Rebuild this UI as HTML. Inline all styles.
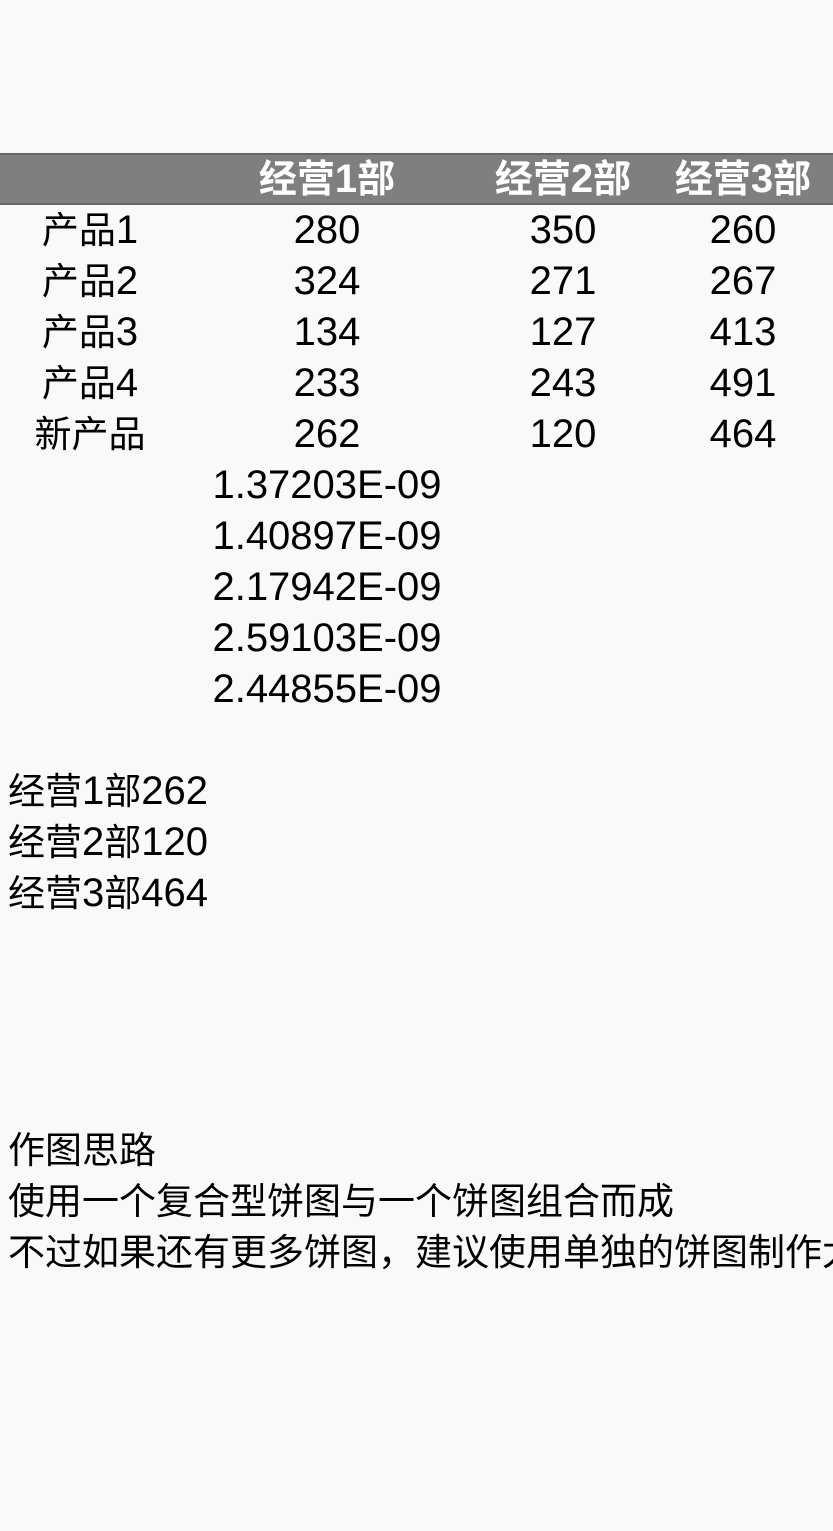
<!DOCTYPE html>
<html><head><meta charset="utf-8"><style>
html,body{margin:0;padding:0;background:#f9f9f9;width:833px;height:1531px;overflow:hidden;position:relative}
body{font-family:"Liberation Sans","Noto Sans CJK SC",sans-serif;font-size:37px;color:#000}
.hdr{position:absolute;left:0;top:153px;width:833px;height:52px;background:#7f7f7f;border-top:2px solid #666;border-bottom:2px solid #666;box-sizing:border-box}
.c{position:absolute;line-height:51px;height:51px;text-align:center;white-space:nowrap}
.h{color:#fff;font-weight:bold;font-size:38px}
.l{position:absolute;left:8px;line-height:51px;white-space:nowrap}
.n{font-size:40px}
</style></head><body>
<div class="hdr"></div>
<div class="c h" style="left:227px;width:200px;top:154px">经营<span class="n">1</span>部</div>
<div class="c h" style="left:463px;width:200px;top:154px">经营<span class="n">2</span>部</div>
<div class="c h" style="left:643px;width:200px;top:154px">经营<span class="n">3</span>部</div>

<div class="c" style="left:-10px;width:200px;top:205px">产品<span class="n">1</span></div>
<div class="c n" style="left:227px;width:200px;top:205px">280</div>
<div class="c n" style="left:463px;width:200px;top:205px">350</div>
<div class="c n" style="left:643px;width:200px;top:205px">260</div>

<div class="c" style="left:-10px;width:200px;top:256px">产品<span class="n">2</span></div>
<div class="c n" style="left:227px;width:200px;top:256px">324</div>
<div class="c n" style="left:463px;width:200px;top:256px">271</div>
<div class="c n" style="left:643px;width:200px;top:256px">267</div>

<div class="c" style="left:-10px;width:200px;top:307px">产品<span class="n">3</span></div>
<div class="c n" style="left:227px;width:200px;top:307px">134</div>
<div class="c n" style="left:463px;width:200px;top:307px">127</div>
<div class="c n" style="left:643px;width:200px;top:307px">413</div>

<div class="c" style="left:-10px;width:200px;top:358px">产品<span class="n">4</span></div>
<div class="c n" style="left:227px;width:200px;top:358px">233</div>
<div class="c n" style="left:463px;width:200px;top:358px">243</div>
<div class="c n" style="left:643px;width:200px;top:358px">491</div>

<div class="c" style="left:-10px;width:200px;top:409px">新产品</div>
<div class="c n" style="left:227px;width:200px;top:409px">262</div>
<div class="c n" style="left:463px;width:200px;top:409px">120</div>
<div class="c n" style="left:643px;width:200px;top:409px">464</div>

<div class="c n" style="left:177px;width:300px;top:460px">1.37203E-09</div>
<div class="c n" style="left:177px;width:300px;top:511px">1.40897E-09</div>
<div class="c n" style="left:177px;width:300px;top:562px">2.17942E-09</div>
<div class="c n" style="left:177px;width:300px;top:613px">2.59103E-09</div>
<div class="c n" style="left:177px;width:300px;top:664px">2.44855E-09</div>

<div class="l" style="top:766px">经营<span class="n">1</span>部<span class="n">262</span></div>
<div class="l" style="top:817px">经营<span class="n">2</span>部<span class="n">120</span></div>
<div class="l" style="top:868px">经营<span class="n">3</span>部<span class="n">464</span></div>

<div class="l" style="top:1125px">作图思路</div>
<div class="l" style="top:1176px">使用一个复合型饼图与一个饼图组合而成</div>
<div class="l" style="top:1227px">不过如果还有更多饼图，建议使用单独的饼图制作太</div>
</body></html>
